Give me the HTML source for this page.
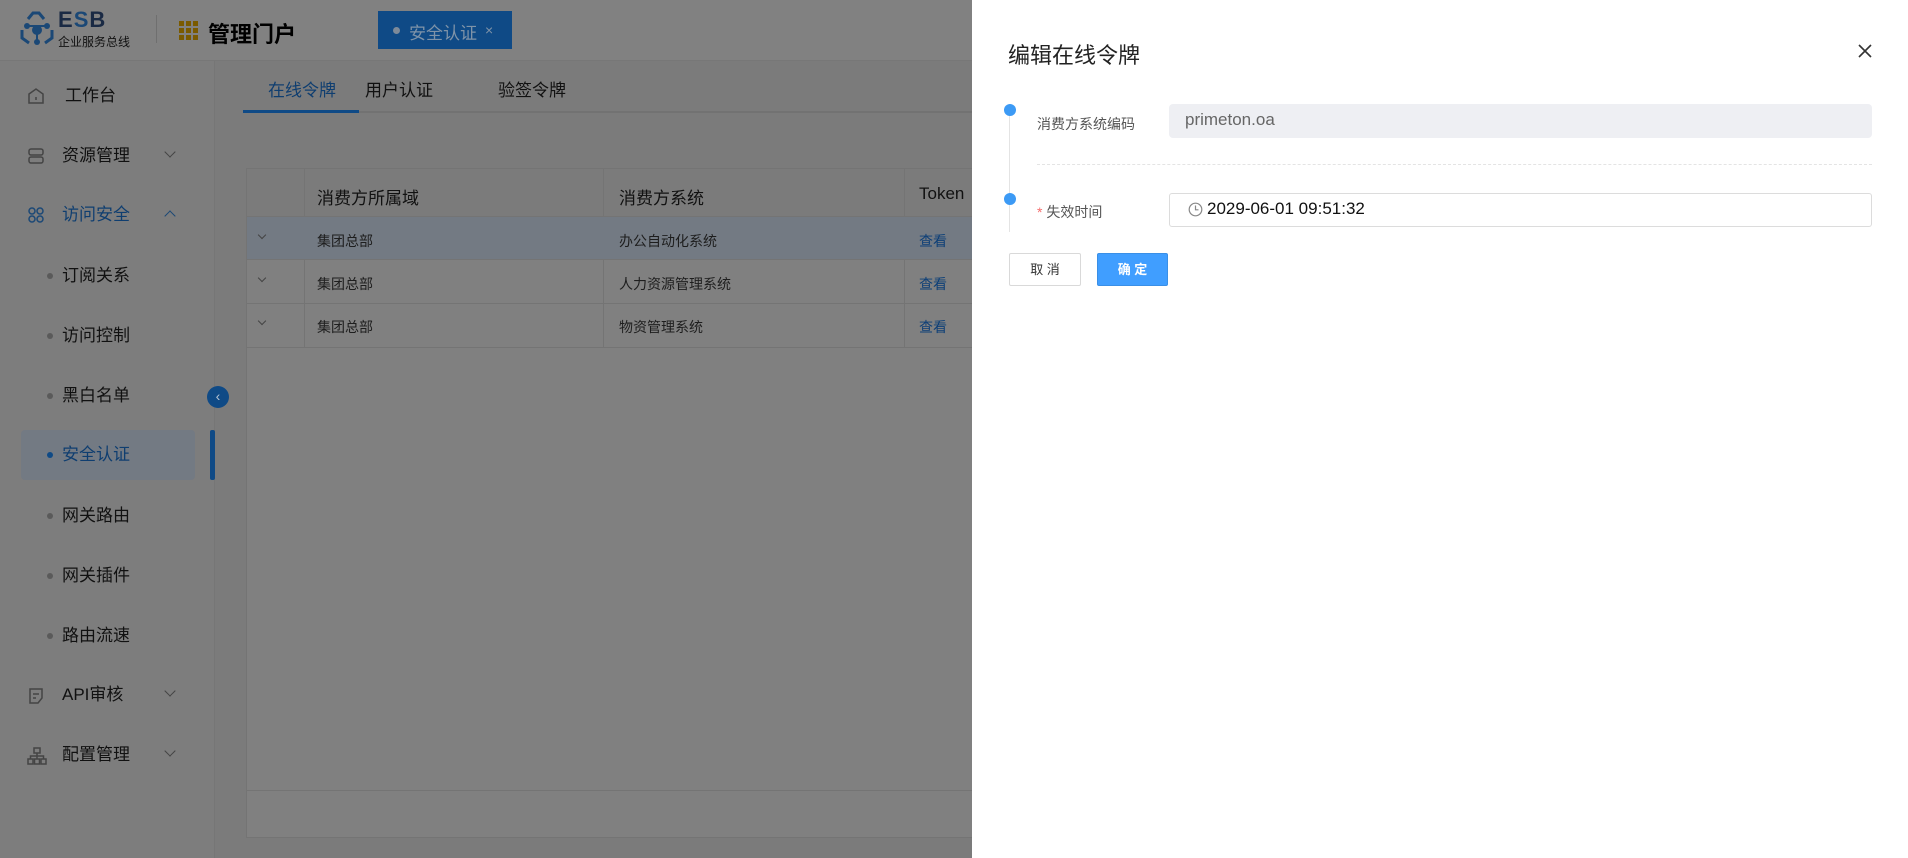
<!DOCTYPE html>
<html><head><meta charset="utf-8"><style>
*{margin:0;padding:0;box-sizing:border-box}
body{width:1908px;height:858px;overflow:hidden;position:relative;font-family:"Liberation Sans","Noto Sans CJK SC",sans-serif;background:#7b7b7b}
.a{position:absolute}
.hdr{left:0;top:0;width:972px;height:61px;background:#818181;border-bottom:1px solid #777}
.side{left:0;top:61px;width:215px;height:797px;background:#7d7d7d;border-right:1px solid #767676}
.si{position:absolute;left:62px;font-size:17px;color:#111;line-height:20px}
.dot{position:absolute;left:47px;width:6px;height:6px;border-radius:3px;background:#5a5a5a}
.chev{position:absolute;left:166px;width:8px;height:8px;border-right:1.5px solid #444;border-bottom:1.5px solid #444;transform:rotate(45deg)}
.main{left:216px;top:61px;width:756px;height:797px;background:#7b7b7b}
.tbl{left:246px;top:168px;width:726px;height:670px;background:#808080;border:1px solid #747474;border-right:none}
.th{font-size:17px;color:#111}
.td{font-size:14px;color:#1e1e1e}
.lk{font-size:14px;color:#0d3f77}
.drawer{left:972px;top:0;width:936px;height:858px;background:#fff}
</style></head><body>
<div class="a hdr">
  <svg class="a" style="left:19px;top:10px" width="36" height="36" viewBox="0 0 36 36"><g stroke="#1b4876" stroke-width="3" fill="none"><path d="M9 9 L14 3 L20 3 L25 9"/><path d="M3 20 L3 28 L10 33"/><path d="M33 20 L33 28 L26 33"/></g><g fill="#1b4876"><circle cx="18" cy="20" r="5"/><circle cx="8" cy="16" r="3"/><circle cx="28" cy="16" r="3"/><circle cx="18" cy="32" r="3"/></g><g stroke="#1b4876" stroke-width="2"><path d="M8 16 L28 16 M18 20 L18 32"/></g></svg>
  <div class="a" style="left:58px;top:7px;font-size:22px;font-weight:bold;color:#1a2a44;letter-spacing:1px">E<span style="color:#1b4876">S</span>B</div>
  <div class="a" style="left:58px;top:33px;font-size:12px;color:#111">企业服务总线</div>
  <div class="a" style="left:156px;top:15px;width:1px;height:28px;background:#6f6f6f"></div>
  <div class="a" style="left:179px;top:20px;width:20px;height:20px;background:repeating-linear-gradient(90deg,#7a5a00 0 5px,transparent 5px 7px),#7a5a00;"></div>
  <div class="a" style="left:179px;top:20px;width:20px;height:20px;background:repeating-linear-gradient(0deg,transparent 0 5px,#818181 5px 7px)"></div>
  <div class="a" style="left:179px;top:20px;width:20px;height:20px;background:repeating-linear-gradient(90deg,transparent 0 5px,#818181 5px 7px)"></div>
  <div class="a" style="left:208px;top:17px;font-size:22px;font-weight:bold;color:#000">管理门户</div>
  <div class="a" style="left:378px;top:11px;width:134px;height:38px;background:#0f4a86"></div>
  <div class="a" style="left:393px;top:27px;width:7px;height:7px;border-radius:4px;background:#7d8a99"></div>
  <div class="a" style="left:409px;top:19px;font-size:17px;color:#7f93a8">安全认证</div>
  <div class="a" style="left:485px;top:22px;font-size:14px;color:#7f93a8">×</div>
</div>
<div class="a side">
  <svg class="a" style="left:27px;top:26px" width="18" height="18" viewBox="0 0 18 18"><path d="M2 7 L9 2 L16 7 L16 16 L2 16 Z" fill="none" stroke="#444" stroke-width="1.5"/><path d="M9 10 V13" stroke="#444" stroke-width="1.5"/></svg>
  <div class="si" style="top:25px;left:65px">工作台</div>
  <svg class="a" style="left:27px;top:86px" width="18" height="18" viewBox="0 0 18 18"><rect x="2" y="2" width="14" height="6" rx="2" fill="none" stroke="#444" stroke-width="1.5"/><rect x="2" y="10" width="14" height="6" rx="2" fill="none" stroke="#444" stroke-width="1.5"/></svg>
  <div class="si" style="top:85px">资源管理</div><div class="chev" style="top:87px"></div>
  <svg class="a" style="left:27px;top:145px" width="18" height="18" viewBox="0 0 18 18"><g fill="none" stroke="#1b4876" stroke-width="1.5"><circle cx="5" cy="5" r="3"/><circle cx="13" cy="5" r="3"/><circle cx="5" cy="13" r="3"/><circle cx="13" cy="13" r="3"/></g></svg>
  <div class="si" style="top:144px;color:#0f3e70">访问安全</div><div class="chev" style="top:151px;transform:rotate(225deg);border-color:#1b4876"></div>
  <div class="dot" style="top:212px"></div><div class="si" style="top:205px">订阅关系</div>
  <div class="dot" style="top:272px"></div><div class="si" style="top:265px">访问控制</div>
  <div class="dot" style="top:332px"></div><div class="si" style="top:325px">黑白名单</div>
  <div class="a" style="left:21px;top:369px;width:174px;height:50px;background:#737a83;border-radius:4px"></div>
  <div class="a" style="left:210px;top:369px;width:5px;height:50px;background:#0f4a86;border-radius:2px"></div>
  <div class="dot" style="top:391px;background:#0f4a86"></div><div class="si" style="top:384px;color:#0f3e70">安全认证</div>
  <div class="dot" style="top:452px"></div><div class="si" style="top:445px">网关路由</div>
  <div class="dot" style="top:512px"></div><div class="si" style="top:505px">网关插件</div>
  <div class="dot" style="top:572px"></div><div class="si" style="top:565px">路由流速</div>
  <svg class="a" style="left:27px;top:626px" width="18" height="18" viewBox="0 0 18 18"><path d="M3 2 H15 V11 L11 16 H3 Z M6 7 H12 M6 11 H9" fill="none" stroke="#444" stroke-width="1.5"/></svg>
  <div class="si" style="top:624px">API审核</div><div class="chev" style="top:626px"></div>
  <svg class="a" style="left:27px;top:686px" width="20" height="18" viewBox="0 0 20 18"><g fill="none" stroke="#444" stroke-width="1.5"><rect x="7" y="1" width="6" height="5"/><rect x="1" y="12" width="5" height="5"/><rect x="7.5" y="12" width="5" height="5"/><rect x="14" y="12" width="5" height="5"/><path d="M10 6 V12 M3.5 12 V9 H16.5 V12"/></g></svg>
  <div class="si" style="top:684px">配置管理</div><div class="chev" style="top:686px"></div>
</div>
<div class="a main">
  <div class="a" style="left:52px;top:15px;font-size:17px;color:#0f3e70">在线令牌</div>
  <div class="a" style="left:149px;top:15px;font-size:17px;color:#111">用户认证</div>
  <div class="a" style="left:282px;top:15px;font-size:17px;color:#111">验签令牌</div>
  <div class="a" style="left:27px;top:50px;width:729px;height:2px;background:#727272"></div>
  <div class="a" style="left:27px;top:49px;width:116px;height:3px;background:#0f4a86"></div>
</div>
<div class="a" style="left:207px;top:386px;width:22px;height:22px;border-radius:11px;background:#0f4a86;color:#b9c6d4;font-size:14px;text-align:center;line-height:21px;z-index:5">‹</div>
<div class="a tbl">
  <div class="a" style="left:0;top:0;width:726px;height:48px;background:#7b7b7b;border-bottom:1px solid #747474"></div>
  <div class="a" style="left:57px;top:0;width:1px;height:178px;background:#747474"></div>
  <div class="a" style="left:356px;top:0;width:1px;height:178px;background:#747474"></div>
  <div class="a" style="left:657px;top:0;width:1px;height:178px;background:#747474"></div>
  <div class="a th" style="left:70px;top:15px">消费方所属域</div>
  <div class="a th" style="left:372px;top:15px">消费方系统</div>
  <div class="a th" style="left:672px;top:15px">Token</div>
  <div class="a" style="left:0;top:48px;width:726px;height:43px;background:#737a83;border-bottom:1px solid #747474"></div>
  <div class="a" style="left:0;top:134px;width:726px;height:1px;background:#747474"></div>
  <div class="a" style="left:0;top:178px;width:726px;height:1px;background:#747474"></div>
  <div class="a" style="left:0;top:621px;width:726px;height:1px;background:#747474"></div>
  <div class="chev" style="left:12px;top:63px;width:6px;height:6px;border-width:1px"></div>
  <div class="chev" style="left:12px;top:106px;width:6px;height:6px;border-width:1px"></div>
  <div class="chev" style="left:12px;top:149px;width:6px;height:6px;border-width:1px"></div>
  <div class="a td" style="left:70px;top:62px">集团总部</div><div class="a td" style="left:372px;top:62px">办公自动化系统</div><div class="a lk" style="left:672px;top:62px">查看</div>
  <div class="a td" style="left:70px;top:105px">集团总部</div><div class="a td" style="left:372px;top:105px">人力资源管理系统</div><div class="a lk" style="left:672px;top:105px">查看</div>
  <div class="a td" style="left:70px;top:148px">集团总部</div><div class="a td" style="left:372px;top:148px">物资管理系统</div><div class="a lk" style="left:672px;top:148px">查看</div>
</div>
<div class="a drawer">
  <div class="a" style="left:36px;top:38px;font-size:22px;color:#222">编辑在线令牌</div>
  <svg class="a" style="left:885px;top:43px" width="16" height="16" viewBox="0 0 16 16"><path d="M2 2 L14 14 M14 2 L2 14" stroke="#333" stroke-width="1.6"/></svg>
  <div class="a" style="left:37px;top:110px;width:1px;height:122px;background:#e4e4e4"></div>
  <div class="a" style="left:32px;top:104px;width:12px;height:12px;border-radius:6px;background:#3c9af5"></div>
  <div class="a" style="left:32px;top:193px;width:12px;height:12px;border-radius:6px;background:#3c9af5"></div>
  <div class="a" style="left:65px;top:114px;font-size:14px;color:#555">消费方系统编码</div>
  <div class="a" style="left:197px;top:104px;width:703px;height:34px;background:#eeeff3;border-radius:4px"></div>
  <div class="a" style="left:213px;top:110px;font-size:17px;color:#666">primeton.oa</div>
  <div class="a" style="left:65px;top:164px;width:835px;border-top:1px dashed #e4e4e4"></div>
  <div class="a" style="left:65px;top:202px;font-size:14px;color:#555"><span style="color:#f56c6c">*</span> 失效时间</div>
  <div class="a" style="left:197px;top:193px;width:703px;height:34px;border:1px solid #dcdcdc;border-radius:3px"></div>
  <svg class="a" style="left:216px;top:202px" width="15" height="15" viewBox="0 0 15 15"><circle cx="7.5" cy="7.5" r="6.3" fill="none" stroke="#888" stroke-width="1.2"/><path d="M7.5 3.5 V7.8 H10.5" fill="none" stroke="#888" stroke-width="1.2"/></svg>
  <div class="a" style="left:235px;top:199px;font-size:17px;color:#111">2029-06-01 09:51:32</div>
  <div class="a" style="left:37px;top:253px;width:72px;height:33px;border:1px solid #d9d9d9;border-radius:2px;font-size:13px;color:#333;text-align:center;line-height:31px">取 消</div>
  <div class="a" style="left:125px;top:253px;width:71px;height:33px;background:#409eff;border:1px solid #3a8fe6;border-radius:2px;font-size:13px;color:#fff;text-align:center;line-height:31px;font-weight:bold">确 定</div>
</div>
</body></html>
